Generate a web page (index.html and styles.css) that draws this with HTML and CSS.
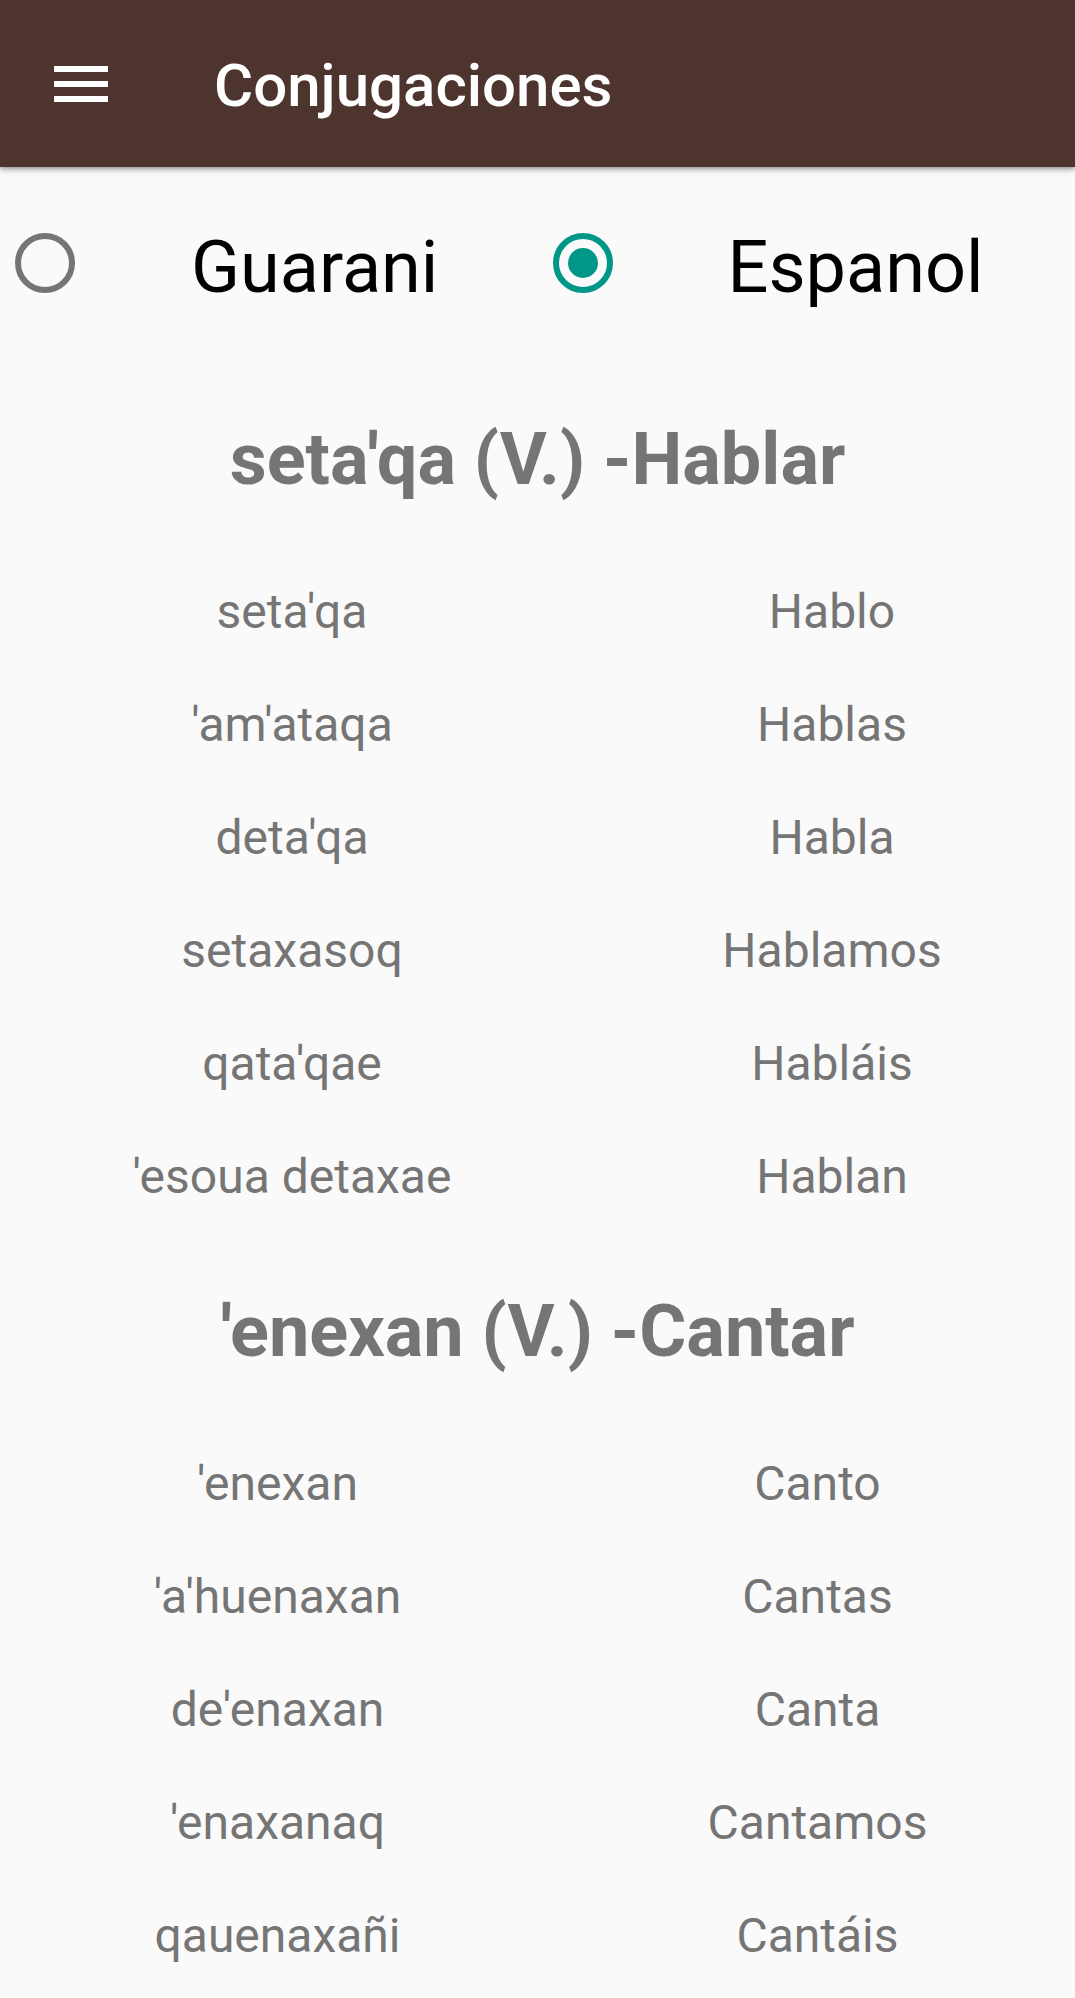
FILE: index.html
```html
<!DOCTYPE html>
<html lang="es">
<head>
<meta charset="utf-8">
<title>Conjugaciones</title>
<link rel="stylesheet" href="styles.css">
</head>
<body>
<header class="appbar">
  <button class="menu-btn" aria-label="Menu">
    <svg viewBox="0 0 24 24" width="72" height="72"><path fill="#fff" d="M3 18h18v-2H3v2zm0-5h18v-2H3v2zm0-7v2h18V6H3z"/></svg>
  </button>
  <h1 class="title">Conjugaciones</h1>
</header>
<main class="content">
  <div class="radio-group">
    <label class="radio-item">
      <span class="radio"></span>
      <span class="radio-label">Guarani</span>
    </label>
    <label class="radio-item">
      <span class="radio radio-checked"></span>
      <span class="radio-label">Espanol</span>
    </label>
  </div>

  <section class="verb verb-first">
    <h2 class="verb-title">seta'qa (V.) -Hablar</h2>
    <div class="table table-hablar">
      <div class="cell">seta'qa</div><div class="cell">Hablo</div>
      <div class="cell">'am'ataqa</div><div class="cell">Hablas</div>
      <div class="cell">deta'qa</div><div class="cell">Habla</div>
      <div class="cell">setaxasoq</div><div class="cell">Hablamos</div>
      <div class="cell">qata'qae</div><div class="cell">Habláis</div>
      <div class="cell">'esoua detaxae</div><div class="cell">Hablan</div>
    </div>
  </section>

  <section class="verb verb-next">
    <h2 class="verb-title">'enexan (V.) -Cantar</h2>
    <div class="table table-cantar">
      <div class="cell">'enexan</div><div class="cell">Canto</div>
      <div class="cell">'a'huenaxan</div><div class="cell">Cantas</div>
      <div class="cell">de'enaxan</div><div class="cell">Canta</div>
      <div class="cell">'enaxanaq</div><div class="cell">Cantamos</div>
      <div class="cell">qauenaxañi</div><div class="cell">Cantáis</div>
    </div>
  </section>
</main>
</body>
</html>
```

FILE: styles.css
```css
html, body {
  margin: 0;
  padding: 0;
}
body {
  background: #fafafa;
  font-family: Roboto, "Noto Sans", Arial, sans-serif;
  overflow-x: hidden;
}
.appbar {
  height: 167px;
  background: #4e342e;
  display: flex;
  align-items: center;
  box-shadow: 0 3px 6px rgba(0,0,0,0.28), 0 1px 3px rgba(0,0,0,0.2);
  position: relative;
  z-index: 2;
}
.menu-btn {
  margin-left: 45px;
  width: 72px;
  height: 72px;
  padding: 0;
  border: 0;
  background: none;
  display: flex;
}
.title {
  margin: 0 0 0 97px;
  color: #fff;
  font-size: 60px;
  font-weight: 500;
  line-height: 70px;
  position: relative;
  top: 2px;
}
.radio-group {
  display: flex;
  height: 192px;
}
.radio-item {
  width: 50%;
  display: flex;
  align-items: center;
}
.radio {
  box-sizing: border-box;
  width: 60px;
  height: 60px;
  border: 6px solid #757575;
  border-radius: 50%;
  margin-left: 15px;
  flex: none;
  display: flex;
  align-items: center;
  justify-content: center;
}
.radio-checked {
  border-color: #009688;
}
.radio-checked::after {
  content: "";
  width: 30px;
  height: 30px;
  border-radius: 50%;
  background: #009688;
}
.radio-label {
  margin-left: 116px;
  margin-top: 9px;
  font-size: 72px;
  line-height: 84px;
  color: #000;
}
.radio-item + .radio-item .radio-label {
  margin-left: 115px;
}
.verb-title {
  margin: 0 0 53px;
  text-align: center;
  font-size: 72px;
  font-weight: 700;
  line-height: 84px;
  color: #757575;
}
.verb-first .verb-title {
  margin-top: 59px;
}
.verb-next .verb-title {
  margin-top: 57px;
}
.table {
  display: grid;
  width: 1080px;
}
.table-hablar {
  grid-template-columns: 584px 496px;
}
.table-cantar {
  grid-template-columns: 555px 525px;
}
.cell {
  text-align: center;
  font-size: 48px;
  line-height: 113px;
  color: #757575;
  white-space: nowrap;
}
```
